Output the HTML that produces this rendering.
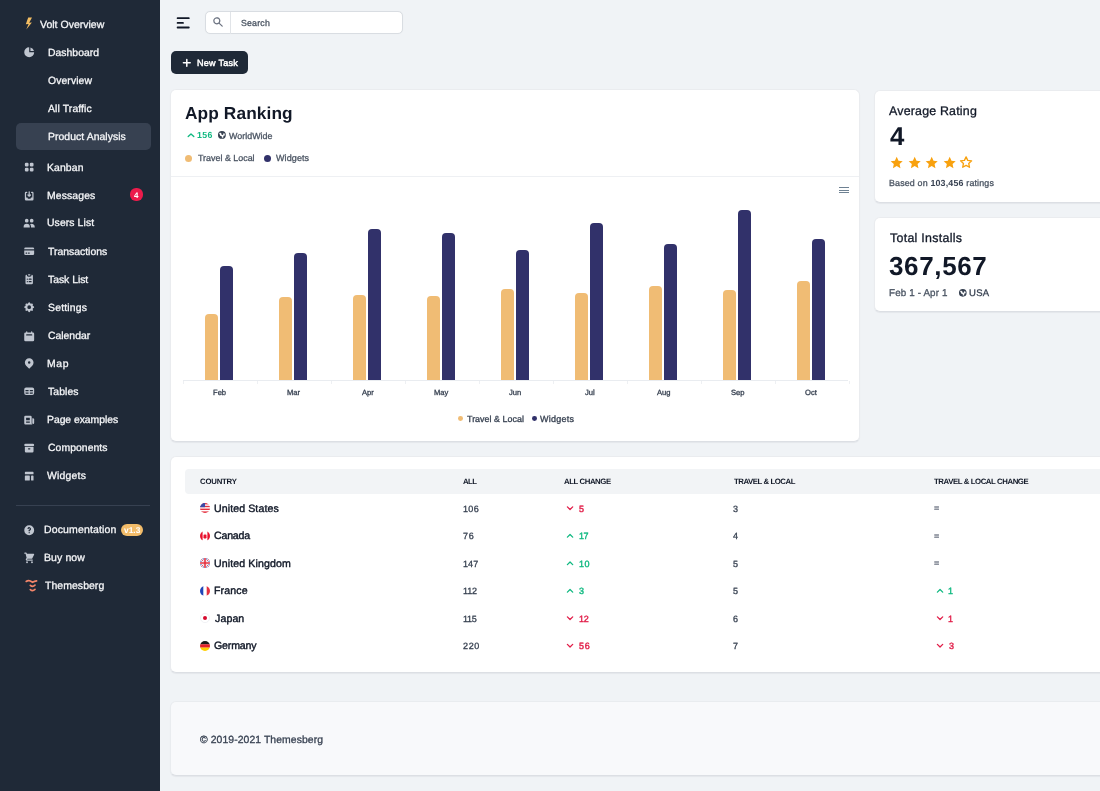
<!DOCTYPE html>
<html><head><meta charset="utf-8"><title>Volt Dashboard</title>
<style>
html,body{margin:0;padding:0;}
body{width:1100px;height:791px;overflow:hidden;position:relative;background:#F0F3F6;font-family:"Liberation Sans",sans-serif;text-rendering:geometricPrecision;}
.t{position:absolute;line-height:1;white-space:nowrap;will-change:transform;}
</style></head><body>
<div style="position:absolute;left:0px;top:0px;width:160px;height:791px;background:#1F2937"></div>
<svg style="position:absolute;left:25px;top:16.5px" width="8" height="13" viewBox="0 0 8 13"><path d="M7 0.5 L3.2 0.5 L0.8 7.2 L3.6 7.0 L1.3 12.5 L6.9 5.6 L4.2 5.8 Z" fill="#F3BD62"/></svg>
<div class="t" style="left:40.10px;top:20px;font-size:10.5px;color:#F5F6F8;font-weight:400;letter-spacing:0.008px;-webkit-text-stroke:0.3px #F5F6F8;">Volt Overview</div>
<div style="position:absolute;left:15.5px;top:123.4px;width:135.5px;height:26.2px;background:#374151;border-radius:5px"></div>
<div class="t" style="left:47.50px;top:49px;font-size:10.4px;color:#F5F6F8;font-weight:400;letter-spacing:0.025px;-webkit-text-stroke:0.3px #F5F6F8;">Dashboard</div>
<svg style="position:absolute;left:23.00px;top:46.40px;" width="12.4" height="12.4" viewBox="0 0 20 20" fill="#C0C6D0"><path d="M2 10a8 8 0 018-8v8h8a8 8 0 11-16 0z"/><path d="M12 2.252A8.014 8.014 0 0117.748 8H12V2.252z"/></svg>
<div class="t" style="left:47.80px;top:77px;font-size:10.4px;color:#F5F6F8;font-weight:400;letter-spacing:0.100px;-webkit-text-stroke:0.3px #F5F6F8;">Overview</div>
<div class="t" style="left:48.30px;top:105px;font-size:10.4px;color:#F5F6F8;font-weight:400;letter-spacing:0.120px;-webkit-text-stroke:0.3px #F5F6F8;">All Traffic</div>
<div class="t" style="left:48.10px;top:133px;font-size:10.4px;color:#F5F6F8;font-weight:400;letter-spacing:0.067px;-webkit-text-stroke:0.3px #F5F6F8;">Product Analysis</div>
<div class="t" style="left:46.90px;top:164px;font-size:10.4px;color:#F5F6F8;font-weight:400;letter-spacing:0.120px;-webkit-text-stroke:0.3px #F5F6F8;">Kanban</div>
<svg style="position:absolute;left:23.00px;top:161.30px;" width="12.4" height="12.4" viewBox="0 0 20 20" fill="#C0C6D0"><path d="M5 3a2 2 0 00-2 2v2a2 2 0 002 2h2a2 2 0 002-2V5a2 2 0 00-2-2H5zM5 11a2 2 0 00-2 2v2a2 2 0 002 2h2a2 2 0 002-2v-2a2 2 0 00-2-2H5zM11 5a2 2 0 012-2h2a2 2 0 012 2v2a2 2 0 01-2 2h-2a2 2 0 01-2-2V5zM11 13a2 2 0 012-2h2a2 2 0 012 2v2a2 2 0 01-2 2h-2a2 2 0 01-2-2v-2z"/></svg>
<div class="t" style="left:46.90px;top:192px;font-size:10.4px;color:#F5F6F8;font-weight:400;letter-spacing:0.129px;-webkit-text-stroke:0.3px #F5F6F8;">Messages</div>
<svg style="position:absolute;left:23.00px;top:189.70px;" width="12.4" height="12.4" viewBox="0 0 20 20" fill="#C0C6D0"><path d="M8.707 7.293a1 1 0 00-1.414 1.414l2 2a1 1 0 001.414 0l2-2a1 1 0 00-1.414-1.414L11 7.586V3a1 1 0 10-2 0v4.586l-.293-.293z"/><path d="M3 5a2 2 0 012-2h1a1 1 0 010 2H5v7h2l1 2h4l1-2h2V5h-1a1 1 0 110-2h1a2 2 0 012 2v10a2 2 0 01-2 2H5a2 2 0 01-2-2V5z"/></svg>
<div class="t" style="left:47.00px;top:219px;font-size:10.4px;color:#F5F6F8;font-weight:400;letter-spacing:0.100px;-webkit-text-stroke:0.3px #F5F6F8;">Users List</div>
<svg style="position:absolute;left:23.00px;top:217.00px;" width="12.4" height="12.4" viewBox="0 0 20 20" fill="#C0C6D0"><path d="M9 6a3 3 0 11-6 0 3 3 0 016 0zM17 6a3 3 0 11-6 0 3 3 0 016 0zM12.93 17c.046-.327.07-.66.07-1a6.97 6.97 0 00-1.5-4.33A5 5 0 0119 16v1h-6.07zM6 11a5 5 0 015 5v1H1v-1a5 5 0 015-5z"/></svg>
<div class="t" style="left:48.10px;top:248px;font-size:10.4px;color:#F5F6F8;font-weight:400;letter-spacing:0.009px;-webkit-text-stroke:0.3px #F5F6F8;">Transactions</div>
<svg style="position:absolute;left:23.00px;top:245.40px;" width="12.4" height="12.4" viewBox="0 0 20 20" fill="#C0C6D0"><path d="M4 4a2 2 0 00-2 2v1h16V6a2 2 0 00-2-2H4z"/><path fill-rule="evenodd" d="M18 9H2v5a2 2 0 002 2h12a2 2 0 002-2V9zM4 13a1 1 0 011-1h1a1 1 0 110 2H5a1 1 0 01-1-1zm5-1a1 1 0 100 2h1a1 1 0 100-2H9z"/></svg>
<div class="t" style="left:48.10px;top:276px;font-size:10.4px;color:#F5F6F8;font-weight:400;letter-spacing:-0.025px;-webkit-text-stroke:0.3px #F5F6F8;">Task List</div>
<svg style="position:absolute;left:23.00px;top:273.30px;" width="12.4" height="12.4" viewBox="0 0 20 20" fill="#C0C6D0"><path d="M9 2a1 1 0 000 2h2a1 1 0 100-2H9z"/><path fill-rule="evenodd" d="M4 5a2 2 0 012-2 3 3 0 003 3h2a3 3 0 003-3 2 2 0 012 2v11a2 2 0 01-2 2H6a2 2 0 01-2-2V5zm3 4a1 1 0 000 2h.01a1 1 0 100-2H7zm3 0a1 1 0 000 2h3a1 1 0 100-2h-3zm-3 4a1 1 0 100 2h.01a1 1 0 100-2H7zm3 0a1 1 0 100 2h3a1 1 0 100-2h-3z"/></svg>
<div class="t" style="left:47.50px;top:304px;font-size:10.4px;color:#F5F6F8;font-weight:400;letter-spacing:0.214px;-webkit-text-stroke:0.3px #F5F6F8;">Settings</div>
<svg style="position:absolute;left:23.00px;top:301.40px;" width="12.4" height="12.4" viewBox="0 0 20 20" fill="#C0C6D0"><path fill-rule="evenodd" d="M11.49 3.17c-.38-1.560-2.6-1.56-2.98 0a1.532 1.532 0 01-2.286.948c-1.372-.836-2.942.734-2.106 2.106.54.886.061 2.042-.947 2.287-1.561.379-1.561 2.6 0 2.978a1.532 1.532 0 01.947 2.287c-.836 1.372.734 2.942 2.106 2.106a1.532 1.532 0 012.287.947c.379 1.561 2.6 1.561 2.978 0a1.533 1.533 0 012.287-.947c1.372.836 2.942-.734 2.106-2.106a1.533 1.533 0 01.947-2.287c1.561-.379 1.561-2.6 0-2.978a1.532 1.532 0 01-.947-2.287c.836-1.372-.734-2.942-2.106-2.106a1.532 1.532 0 01-2.287-.947zM10 13a3 3 0 100-6 3 3 0 000 6z"/></svg>
<div class="t" style="left:47.50px;top:332px;font-size:10.4px;color:#F5F6F8;font-weight:400;-webkit-text-stroke:0.3px #F5F6F8;">Calendar</div>
<svg style="position:absolute;left:23.00px;top:329.70px;" width="12.4" height="12.4" viewBox="0 0 20 20" fill="#C0C6D0"><path fill-rule="evenodd" d="M6 2a1 1 0 00-1 1v1H4a2 2 0 00-2 2v10a2 2 0 002 2h12a2 2 0 002-2V6a2 2 0 00-2-2h-1V3a1 1 0 10-2 0v1H7V3a1 1 0 00-1-1zm0 5a1 1 0 000 2h8a1 1 0 100-2H6z"/></svg>
<div class="t" style="left:47.10px;top:360px;font-size:10.4px;color:#F5F6F8;font-weight:400;letter-spacing:0.600px;-webkit-text-stroke:0.3px #F5F6F8;">Map</div>
<svg style="position:absolute;left:23.00px;top:357.40px;" width="12.4" height="12.4" viewBox="0 0 20 20" fill="#C0C6D0"><path fill-rule="evenodd" d="M5.05 4.05a7 7 0 119.9 9.9L10 18.9l-4.95-4.95a7 7 0 010-9.9zM10 11a2 2 0 100-4 2 2 0 000 4z"/></svg>
<div class="t" style="left:47.80px;top:388px;font-size:10.4px;color:#F5F6F8;font-weight:400;letter-spacing:0.100px;-webkit-text-stroke:0.3px #F5F6F8;">Tables</div>
<svg style="position:absolute;left:23.00px;top:385.30px;" width="12.4" height="12.4" viewBox="0 0 20 20" fill="#C0C6D0"><path fill-rule="evenodd" d="M5 4a3 3 0 00-3 3v6a3 3 0 003 3h10a3 3 0 003-3V7a3 3 0 00-3-3H5zm-1 9v-1h5v2H5a1 1 0 01-1-1zm7 1h4a1 1 0 001-1v-1h-5v2zm0-4h5V8h-5v2zM9 8H4v2h5V8z"/></svg>
<div class="t" style="left:47.10px;top:416px;font-size:10.4px;color:#F5F6F8;font-weight:400;letter-spacing:-0.042px;-webkit-text-stroke:0.3px #F5F6F8;">Page examples</div>
<svg style="position:absolute;left:23.00px;top:413.70px;" width="12.4" height="12.4" viewBox="0 0 20 20" fill="#C0C6D0"><path fill-rule="evenodd" d="M2 5a2 2 0 012-2h8a2 2 0 012 2v10a2 2 0 002 2H4a2 2 0 01-2-2V5zm3 1h6v4H5V6zm6 6H5v2h6v-2z"/><path d="M15 7h1a2 2 0 012 2v5.5a1.5 1.5 0 01-3 0V7z"/></svg>
<div class="t" style="left:47.50px;top:444px;font-size:10.4px;color:#F5F6F8;font-weight:400;letter-spacing:0.067px;-webkit-text-stroke:0.3px #F5F6F8;">Components</div>
<svg style="position:absolute;left:23.00px;top:442.10px;" width="12.4" height="12.4" viewBox="0 0 20 20" fill="#C0C6D0"><path d="M4 3a2 2 0 100 4h12a2 2 0 100-4H4z"/><path fill-rule="evenodd" d="M3 8h14v7a2 2 0 01-2 2H5a2 2 0 01-2-2V8zm5 3a1 1 0 011-1h2a1 1 0 110 2H9a1 1 0 01-1-1z"/></svg>
<div class="t" style="left:47.30px;top:472px;font-size:10.4px;color:#F5F6F8;font-weight:400;letter-spacing:0.217px;-webkit-text-stroke:0.3px #F5F6F8;">Widgets</div>
<svg style="position:absolute;left:23.00px;top:469.90px;" width="12.4" height="12.4" viewBox="0 0 20 20" fill="#C0C6D0"><path d="M3 4a1 1 0 011-1h12a1 1 0 011 1v2a1 1 0 01-1 1H4a1 1 0 01-1-1V4zM3 10a1 1 0 011-1h6a1 1 0 011 1v6a1 1 0 01-1 1H4a1 1 0 01-1-1v-6zM14 9a1 1 0 00-1 1v6a1 1 0 001 1h2a1 1 0 001-1v-6a1 1 0 00-1-1h-2z"/></svg>
<div style="position:absolute;left:130.1px;top:188.4px;width:13.4px;height:12.9px;background:#EC1B4B;border-radius:6px"></div>
<div class="t" style="left:134.05px;top:192px;font-size:8.0px;color:#fff;font-weight:700;">4</div>
<div style="position:absolute;left:16px;top:505px;width:134px;height:1px;background:#374151"></div>
<div class="t" style="left:43.70px;top:525px;font-size:10.5px;color:#F5F6F8;font-weight:400;letter-spacing:0.150px;-webkit-text-stroke:0.3px #F5F6F8;">Documentation</div>
<svg style="position:absolute;left:23.00px;top:523.80px;" width="12.4" height="12.4" viewBox="0 0 20 20" fill="#C0C6D0"><path fill-rule="evenodd" d="M18 10a8 8 0 11-16 0 8 8 0 0116 0zm-8-3a1 1 0 00-.867.5 1 1 0 11-1.731-1A3 3 0 0113 8a3.001 3.001 0 01-2 2.830V11a1 1 0 11-2 0v-1a1 1 0 011-1 1 1 0 100-2zm0 8a1 1 0 100-2 1 1 0 000 2z"/></svg>
<div style="position:absolute;left:121px;top:523.7px;width:22.3px;height:12.5px;background:#F2BC6A;border-radius:6px"></div>
<div class="t" style="left:124.35px;top:526px;font-size:8.4px;color:#fff;font-weight:700;">v1.3</div>
<div class="t" style="left:43.70px;top:553px;font-size:10.5px;color:#F5F6F8;font-weight:400;letter-spacing:0.100px;-webkit-text-stroke:0.3px #F5F6F8;">Buy now</div>
<svg style="position:absolute;left:23.00px;top:551.80px;" width="12.4" height="12.4" viewBox="0 0 20 20" fill="#C0C6D0"><path d="M3 1a1 1 0 000 2h1.22l.305 1.222a.997.997 0 00.01.042l1.358 5.43-.893.892C3.74 11.846 4.632 14 6.414 14H15a1 1 0 000-2H6.414l1-1H14a1 1 0 00.894-.553l3-6A1 1 0 0017 3H6.28l-.31-1.243A1 1 0 005 1H3zM16 16.5a1.5 1.5 0 11-3 0 1.5 1.5 0 013 0zM6.5 18a1.5 1.5 0 100-3 1.5 1.5 0 000 3z"/></svg>
<div class="t" style="left:44.90px;top:581px;font-size:10.5px;color:#F5F6F8;font-weight:400;letter-spacing:0.033px;-webkit-text-stroke:0.3px #F5F6F8;">Themesberg</div>
<svg style="position:absolute;left:25px;top:579px" width="14" height="14" viewBox="0 0 14 14" fill="none" stroke="#F4866A" stroke-width="1.65" stroke-linecap="round"><path d="M1.2 2.5 Q2.8 1.2 4.6 1.8 Q6.5 2.6 7.5 3.3 Q9.5 2.2 11.6 1.9"/><path d="M5.3 6.3 Q7.6 8.4 10 6.1"/><path d="M5.3 10.6 Q7.6 12.6 10 10.4"/></svg>
<svg style="position:absolute;left:170px;top:10px" width="30" height="25" viewBox="170 10 30 25" fill="none" stroke="#111827" stroke-width="1.8" stroke-linecap="round"><path d="M177.6 18.2H188.8M177.6 22.9H183M177.6 27.5H188.8"/></svg>
<div style="position:absolute;left:205.3px;top:10.6px;width:197.4px;height:23.6px;background:#fff;border:1px solid #D9DDE2;border-radius:5px;box-sizing:border-box;box-shadow:0 0 1px rgba(17,24,39,0.06)"></div>
<div style="position:absolute;left:230.2px;top:11.5px;width:0.8px;height:22.5px;background:#E1E4E8"></div>
<svg style="position:absolute;left:212.00px;top:16.00px;" width="12" height="12" viewBox="0 0 20 20" fill="#6B7280"><path fill-rule="evenodd" d="M8 4a4 4 0 100 8 4 4 0 000-8zM2 8a6 6 0 1110.89 3.476l4.817 4.817a1 1 0 01-1.414 1.414l-4.816-4.816A6 6 0 012 8z"/></svg>
<div class="t" style="left:240.90px;top:19px;font-size:8.8px;color:#4B5563;font-weight:400;letter-spacing:0.180px;-webkit-text-stroke:0.3px #4B5563;">Search</div>
<div style="position:absolute;left:170.5px;top:50.8px;width:77.7px;height:23.4px;background:#1F2937;border-radius:5px"></div>
<svg style="position:absolute;left:0;top:0;overflow:visible" width="1" height="1"><path d="M183.4 62.8H190.2M186.8 59.4V66.2" stroke="#fff" stroke-width="1.5" stroke-linecap="round" fill="none"/></svg>
<div class="t" style="left:197.10px;top:59px;font-size:9.1px;color:#fff;font-weight:400;letter-spacing:0.229px;-webkit-text-stroke:0.45px #fff;">New Task</div>
<div style="position:absolute;left:170px;top:89px;width:689.8px;height:352.8px;background:#fff;border:1px solid #EAECEF;border-bottom-color:#DCDFE4;border-radius:6px;box-sizing:border-box;box-shadow:0 1px 1px rgba(17,24,39,0.05)"></div>
<div class="t" style="left:185.00px;top:105px;font-size:17.3px;color:#111827;font-weight:700;letter-spacing:0.110px;">App Ranking</div>
<svg style="position:absolute;left:0;top:0;overflow:visible" width="1" height="1"><path d="M188.2 136.6 L191.0 134.0 L193.79999999999998 136.6" fill="none" stroke="#10B981" stroke-width="1.35" stroke-linecap="round" stroke-linejoin="round"/></svg>
<div class="t" style="left:196.90px;top:131px;font-size:8.8px;color:#10B981;font-weight:700;letter-spacing:0.300px;">156</div>
<svg style="position:absolute;left:216.80px;top:130.40px;" width="9.8" height="9.8" viewBox="0 0 20 20" fill="#374151"><path fill-rule="evenodd" d="M10 18a8 8 0 100-16 8 8 0 000 16zM4.332 8.027a6.012 6.012 0 011.912-2.706C6.512 5.73 6.974 6 7.5 6A1.5 1.5 0 019 7.5V8a2 2 0 004 0 2 2 0 011.523-1.943A5.977 5.977 0 0116 10c0 .34-.028.675-.083 1H15a2 2 0 00-2 2v2.197A5.973 5.973 0 0110 16v-2a2 2 0 00-2-2 2 2 0 01-2-2 2 2 0 00-1.668-1.973z"/></svg>
<div class="t" style="left:229.40px;top:132px;font-size:8.9px;color:#4B5563;font-weight:400;letter-spacing:0.037px;-webkit-text-stroke:0.3px #4B5563;">WorldWide</div>
<div style="position:absolute;left:185px;top:154.6px;width:7.3px;height:7.3px;background:#F0BC74;border-radius:50%"></div>
<div class="t" style="left:197.60px;top:154px;font-size:8.9px;color:#4B5563;font-weight:400;letter-spacing:0.015px;-webkit-text-stroke:0.3px #4B5563;">Travel &amp; Local</div>
<div style="position:absolute;left:264px;top:154.6px;width:7.3px;height:7.3px;background:#31316A;border-radius:50%"></div>
<div class="t" style="left:276.30px;top:154px;font-size:9.0px;color:#4B5563;font-weight:400;letter-spacing:0.100px;-webkit-text-stroke:0.3px #4B5563;">Widgets</div>
<div style="position:absolute;left:171px;top:176px;width:688px;height:1px;background:#EEF0F3"></div>
<div style="position:absolute;left:839.3px;top:187.0px;width:9.5px;height:0.9px;background:#6E8192"></div>
<div style="position:absolute;left:839.3px;top:189.8px;width:9.5px;height:0.9px;background:#6E8192"></div>
<div style="position:absolute;left:839.3px;top:192.4px;width:9.5px;height:0.9px;background:#6E8192"></div>
<div style="position:absolute;left:183px;top:379.6px;width:665px;height:0.9px;background:#E9ECF0"></div>
<div style="position:absolute;left:183px;top:380.5px;width:0.8px;height:3px;background:#EEF0F3"></div>
<div style="position:absolute;left:257px;top:380.5px;width:0.8px;height:3px;background:#EEF0F3"></div>
<div style="position:absolute;left:331px;top:380.5px;width:0.8px;height:3px;background:#EEF0F3"></div>
<div style="position:absolute;left:405px;top:380.5px;width:0.8px;height:3px;background:#EEF0F3"></div>
<div style="position:absolute;left:479px;top:380.5px;width:0.8px;height:3px;background:#EEF0F3"></div>
<div style="position:absolute;left:553px;top:380.5px;width:0.8px;height:3px;background:#EEF0F3"></div>
<div style="position:absolute;left:627px;top:380.5px;width:0.8px;height:3px;background:#EEF0F3"></div>
<div style="position:absolute;left:701px;top:380.5px;width:0.8px;height:3px;background:#EEF0F3"></div>
<div style="position:absolute;left:775px;top:380.5px;width:0.8px;height:3px;background:#EEF0F3"></div>
<div style="position:absolute;left:849px;top:380.5px;width:0.8px;height:3px;background:#EEF0F3"></div>
<div style="position:absolute;left:204.9px;top:314px;width:13px;height:65.6px;background:#F0BC74;border-radius:4px 4px 0 0"></div>
<div style="position:absolute;left:219.7px;top:266.2px;width:13.3px;height:113.4px;background:#31316A;border-radius:4px 4px 0 0"></div>
<div class="t" style="left:212.70px;top:389px;font-size:7.6px;color:#374151;font-weight:400;-webkit-text-stroke:0.3px #374151;">Feb</div>
<div style="position:absolute;left:278.9px;top:297.2px;width:13px;height:82.4px;background:#F0BC74;border-radius:4px 4px 0 0"></div>
<div style="position:absolute;left:293.7px;top:252.5px;width:13.3px;height:127.1px;background:#31316A;border-radius:4px 4px 0 0"></div>
<div class="t" style="left:286.60px;top:389px;font-size:7.6px;color:#374151;font-weight:400;-webkit-text-stroke:0.3px #374151;">Mar</div>
<div style="position:absolute;left:352.9px;top:294.5px;width:13px;height:85.1px;background:#F0BC74;border-radius:4px 4px 0 0"></div>
<div style="position:absolute;left:367.7px;top:228.7px;width:13.3px;height:150.9px;background:#31316A;border-radius:4px 4px 0 0"></div>
<div class="t" style="left:361.55px;top:389px;font-size:7.6px;color:#374151;font-weight:400;-webkit-text-stroke:0.3px #374151;">Apr</div>
<div style="position:absolute;left:426.9px;top:296px;width:13px;height:83.6px;background:#F0BC74;border-radius:4px 4px 0 0"></div>
<div style="position:absolute;left:441.7px;top:233.1px;width:13.3px;height:146.5px;background:#31316A;border-radius:4px 4px 0 0"></div>
<div class="t" style="left:433.95px;top:389px;font-size:7.6px;color:#374151;font-weight:400;-webkit-text-stroke:0.3px #374151;">May</div>
<div style="position:absolute;left:500.9px;top:288.5px;width:13px;height:91.1px;background:#F0BC74;border-radius:4px 4px 0 0"></div>
<div style="position:absolute;left:515.7px;top:249.5px;width:13.3px;height:130.1px;background:#31316A;border-radius:4px 4px 0 0"></div>
<div class="t" style="left:509.45px;top:389px;font-size:7.6px;color:#374151;font-weight:400;-webkit-text-stroke:0.3px #374151;">Jun</div>
<div style="position:absolute;left:574.9px;top:293.1px;width:13px;height:86.5px;background:#F0BC74;border-radius:4px 4px 0 0"></div>
<div style="position:absolute;left:589.7px;top:222.7px;width:13.3px;height:156.9px;background:#31316A;border-radius:4px 4px 0 0"></div>
<div class="t" style="left:584.75px;top:389px;font-size:7.6px;color:#374151;font-weight:400;-webkit-text-stroke:0.3px #374151;">Jul</div>
<div style="position:absolute;left:648.9px;top:285.5px;width:13px;height:94.1px;background:#F0BC74;border-radius:4px 4px 0 0"></div>
<div style="position:absolute;left:663.7px;top:243.6px;width:13.3px;height:136.0px;background:#31316A;border-radius:4px 4px 0 0"></div>
<div class="t" style="left:656.90px;top:389px;font-size:7.6px;color:#374151;font-weight:400;-webkit-text-stroke:0.3px #374151;">Aug</div>
<div style="position:absolute;left:722.9px;top:290px;width:13px;height:89.6px;background:#F0BC74;border-radius:4px 4px 0 0"></div>
<div style="position:absolute;left:737.7px;top:209.5px;width:13.3px;height:170.1px;background:#31316A;border-radius:4px 4px 0 0"></div>
<div class="t" style="left:730.60px;top:389px;font-size:7.6px;color:#374151;font-weight:400;-webkit-text-stroke:0.3px #374151;">Sep</div>
<div style="position:absolute;left:796.9px;top:281px;width:13px;height:98.6px;background:#F0BC74;border-radius:4px 4px 0 0"></div>
<div style="position:absolute;left:811.7px;top:239.3px;width:13.3px;height:140.3px;background:#31316A;border-radius:4px 4px 0 0"></div>
<div class="t" style="left:805.30px;top:389px;font-size:7.6px;color:#374151;font-weight:400;-webkit-text-stroke:0.3px #374151;">Oct</div>
<div style="position:absolute;left:457.8px;top:415.8px;width:4.8px;height:4.8px;background:#F0BC74;border-radius:50%"></div>
<div class="t" style="left:466.70px;top:415px;font-size:8.9px;color:#374151;font-weight:400;letter-spacing:0.038px;-webkit-text-stroke:0.3px #374151;">Travel &amp; Local</div>
<div style="position:absolute;left:531.8px;top:415.8px;width:4.8px;height:4.8px;background:#31316A;border-radius:50%"></div>
<div class="t" style="left:539.90px;top:415px;font-size:9.0px;color:#374151;font-weight:400;letter-spacing:0.233px;-webkit-text-stroke:0.3px #374151;">Widgets</div>
<div style="position:absolute;left:874px;top:89.7px;width:240px;height:113.3px;background:#fff;border:1px solid #EAECEF;border-bottom-color:#DCDFE4;border-radius:6px;box-sizing:border-box;box-shadow:0 1px 1px rgba(17,24,39,0.05)"></div>
<div class="t" style="left:889.20px;top:105px;font-size:12.4px;color:#111827;font-weight:400;letter-spacing:0.200px;-webkit-text-stroke:0.3px #111827;">Average Rating</div>
<div class="t" style="left:889.60px;top:125px;font-size:25.8px;color:#111827;font-weight:700;">4</div>
<svg style="position:absolute;left:889.80px;top:155.70px;" width="13.4" height="13.4" viewBox="0 0 20 20" fill="#F8A10E"><path d="M10 1.2l2.7 5.8 6.3.7-4.7 4.3 1.3 6.2L10 15.1l-5.6 3.1 1.3-6.2L1 7.7l6.3-.7z"/></svg>
<svg style="position:absolute;left:907.70px;top:155.70px;" width="13.4" height="13.4" viewBox="0 0 20 20" fill="#F8A10E"><path d="M10 1.2l2.7 5.8 6.3.7-4.7 4.3 1.3 6.2L10 15.1l-5.6 3.1 1.3-6.2L1 7.7l6.3-.7z"/></svg>
<svg style="position:absolute;left:924.60px;top:155.70px;" width="13.4" height="13.4" viewBox="0 0 20 20" fill="#F8A10E"><path d="M10 1.2l2.7 5.8 6.3.7-4.7 4.3 1.3 6.2L10 15.1l-5.6 3.1 1.3-6.2L1 7.7l6.3-.7z"/></svg>
<svg style="position:absolute;left:942.50px;top:155.70px;" width="13.4" height="13.4" viewBox="0 0 20 20" fill="#F8A10E"><path d="M10 1.2l2.7 5.8 6.3.7-4.7 4.3 1.3 6.2L10 15.1l-5.6 3.1 1.3-6.2L1 7.7l6.3-.7z"/></svg>
<svg style="position:absolute;left:958.90px;top:155.00px;" width="14.2" height="14.2" viewBox="0 0 20 20" fill="none"><path d="M10 2.6l2.3 5 5.5.6-4.1 3.7 1.1 5.4L10 14.6l-4.8 2.7 1.1-5.4L2.2 8.2l5.5-.6z" fill="none" stroke="#F8A10E" stroke-width="1.9" stroke-linejoin="round"/></svg>
<div class="t" style="left:888.50px;top:179px;font-size:8.9px;color:#4B5563;font-weight:400;letter-spacing:0.161px;-webkit-text-stroke:0.3px #4B5563;">Based on <b style="font-weight:700;color:#374151;-webkit-text-stroke:0">103,456</b> ratings</div>
<div style="position:absolute;left:874px;top:217.3px;width:240px;height:94.5px;background:#fff;border:1px solid #EAECEF;border-bottom-color:#DCDFE4;border-radius:6px;box-sizing:border-box;box-shadow:0 1px 1px rgba(17,24,39,0.05)"></div>
<div class="t" style="left:889.50px;top:232px;font-size:12.4px;color:#111827;font-weight:400;letter-spacing:0.292px;-webkit-text-stroke:0.3px #111827;">Total Installs</div>
<div class="t" style="left:889.20px;top:253px;font-size:26.0px;color:#111827;font-weight:700;letter-spacing:0.633px;">367,567</div>
<div class="t" style="left:889.00px;top:289px;font-size:9.8px;color:#4B5563;font-weight:400;letter-spacing:0.150px;-webkit-text-stroke:0.3px #4B5563;">Feb 1 - Apr 1</div>
<svg style="position:absolute;left:957.80px;top:287.80px;" width="9.6" height="9.6" viewBox="0 0 20 20" fill="#374151"><path fill-rule="evenodd" d="M10 18a8 8 0 100-16 8 8 0 000 16zM4.332 8.027a6.012 6.012 0 011.912-2.706C6.512 5.73 6.974 6 7.5 6A1.5 1.5 0 019 7.5V8a2 2 0 004 0 2 2 0 011.523-1.943A5.977 5.977 0 0116 10c0 .34-.028.675-.083 1H15a2 2 0 00-2 2v2.197A5.973 5.973 0 0110 16v-2a2 2 0 00-2-2 2 2 0 01-2-2 2 2 0 00-1.668-1.973z"/></svg>
<div class="t" style="left:969.10px;top:289px;font-size:9.5px;color:#374151;font-weight:400;letter-spacing:0.300px;-webkit-text-stroke:0.3px #374151;">USA</div>
<div style="position:absolute;left:170px;top:456px;width:960px;height:217px;background:#fff;border:1px solid #EAECEF;border-bottom-color:#DCDFE4;border-radius:6px;box-sizing:border-box;box-shadow:0 1px 1px rgba(17,24,39,0.05)"></div>
<div style="position:absolute;left:185.4px;top:469px;width:960px;height:25px;background:#F2F4F6;border-radius:4px"></div>
<div class="t" style="left:199.60px;top:478px;font-size:7.8px;color:#111827;font-weight:700;letter-spacing:-0.233px;">COUNTRY</div>
<div class="t" style="left:463.40px;top:478px;font-size:7.8px;color:#111827;font-weight:700;letter-spacing:-0.600px;">ALL</div>
<div class="t" style="left:564.00px;top:478px;font-size:7.8px;color:#111827;font-weight:700;letter-spacing:-0.422px;">ALL CHANGE</div>
<div class="t" style="left:733.70px;top:478px;font-size:7.8px;color:#111827;font-weight:700;letter-spacing:-0.446px;">TRAVEL &amp; LOCAL</div>
<div class="t" style="left:934.10px;top:478px;font-size:7.8px;color:#111827;font-weight:700;letter-spacing:-0.420px;">TRAVEL &amp; LOCAL CHANGE</div>
<svg style="position:absolute;left:199.8px;top:503.20px" width="10" height="10" viewBox="0 0 10 10"><clipPath id="cus"><circle cx="5" cy="5" r="5"/></clipPath><g clip-path="url(#cus)"><rect width="10" height="10" fill="#fff"/><rect y="0" width="10" height="1.4" fill="#E4303F"/><rect y="2.8" width="10" height="1.4" fill="#E4303F"/><rect y="5.6" width="10" height="1.4" fill="#E4303F"/><rect y="8.4" width="10" height="1.6" fill="#E4303F"/><rect width="5" height="4.2" fill="#3B4AA8"/></g></svg>
<div class="t" style="left:213.90px;top:504px;font-size:10.6px;color:#111827;font-weight:400;letter-spacing:0.092px;-webkit-text-stroke:0.4px #111827;">United States</div>
<div class="t" style="left:462.90px;top:505px;font-size:9.0px;color:#374151;font-weight:400;letter-spacing:0.350px;-webkit-text-stroke:0.3px #374151;">106</div>
<svg style="position:absolute;left:0;top:0;overflow:visible" width="1" height="1"><path d="M567.4 506.90000000000003 L570.05 509.50000000000006 L572.6999999999999 506.90000000000003" fill="none" stroke="#E11D48" stroke-width="1.3" stroke-linecap="round" stroke-linejoin="round"/></svg>
<div class="t" style="left:578.90px;top:505px;font-size:9.0px;color:#E11D48;font-weight:400;-webkit-text-stroke:0.4px #E11D48;">5</div>
<div class="t" style="left:733.40px;top:505px;font-size:9.0px;color:#374151;font-weight:400;-webkit-text-stroke:0.3px #374151;">3</div>
<div class="t" style="left:933.80px;top:504px;font-size:9.0px;color:#6B7280;font-weight:400;-webkit-text-stroke:0.3px #6B7280;">=</div>
<svg style="position:absolute;left:199.8px;top:530.70px" width="10" height="10" viewBox="0 0 10 10"><clipPath id="cca"><circle cx="5" cy="5" r="5"/></clipPath><g clip-path="url(#cca)"><rect width="10" height="10" fill="#fff"/><rect width="2.6" height="10" fill="#E8112D"/><rect x="7.4" width="2.6" height="10" fill="#E8112D"/><path d="M5 2.6l.7 1.4.9-.3-.3 2.3.8-.4.2.7L6 6.8l.2.8H3.8l.2-.8L2.7 6.3l.2-.7.8.4-.3-2.3.9.3z" fill="#E8112D"/></g></svg>
<div class="t" style="left:214.20px;top:531px;font-size:10.6px;color:#111827;font-weight:400;letter-spacing:-0.200px;-webkit-text-stroke:0.4px #111827;">Canada</div>
<div class="t" style="left:463.10px;top:532px;font-size:9.0px;color:#374151;font-weight:400;letter-spacing:0.700px;-webkit-text-stroke:0.3px #374151;">76</div>
<svg style="position:absolute;left:0;top:0;overflow:visible" width="1" height="1"><path d="M567.4 537.0999999999999 L570.05 534.4999999999999 L572.6999999999999 537.0999999999999" fill="none" stroke="#10B981" stroke-width="1.3" stroke-linecap="round" stroke-linejoin="round"/></svg>
<div class="t" style="left:578.60px;top:532px;font-size:9.0px;color:#10B981;font-weight:400;letter-spacing:-0.600px;-webkit-text-stroke:0.4px #10B981;">17</div>
<div class="t" style="left:732.90px;top:532px;font-size:9.0px;color:#374151;font-weight:400;-webkit-text-stroke:0.3px #374151;">4</div>
<div class="t" style="left:933.80px;top:532px;font-size:9.0px;color:#6B7280;font-weight:400;-webkit-text-stroke:0.3px #6B7280;">=</div>
<svg style="position:absolute;left:199.8px;top:558.20px" width="10" height="10" viewBox="0 0 10 10"><clipPath id="cuk"><circle cx="5" cy="5" r="5"/></clipPath><g clip-path="url(#cuk)"><rect width="10" height="10" fill="#3246A0"/><path d="M0 0L10 10M10 0L0 10" stroke="#fff" stroke-width="2"/><path d="M0 0L10 10M10 0L0 10" stroke="#E4303F" stroke-width="0.8"/><path d="M5 0V10M0 5H10" stroke="#fff" stroke-width="3"/><path d="M5 0V10M0 5H10" stroke="#E4303F" stroke-width="1.6"/></g></svg>
<div class="t" style="left:213.90px;top:559px;font-size:10.6px;color:#111827;font-weight:400;letter-spacing:0.115px;-webkit-text-stroke:0.4px #111827;">United Kingdom</div>
<div class="t" style="left:462.90px;top:560px;font-size:9.0px;color:#374151;font-weight:400;letter-spacing:0.100px;-webkit-text-stroke:0.3px #374151;">147</div>
<svg style="position:absolute;left:0;top:0;overflow:visible" width="1" height="1"><path d="M567.4 564.5999999999999 L570.05 561.9999999999999 L572.6999999999999 564.5999999999999" fill="none" stroke="#10B981" stroke-width="1.3" stroke-linecap="round" stroke-linejoin="round"/></svg>
<div class="t" style="left:578.60px;top:560px;font-size:9.0px;color:#10B981;font-weight:400;letter-spacing:0.600px;-webkit-text-stroke:0.4px #10B981;">10</div>
<div class="t" style="left:733.40px;top:560px;font-size:9.0px;color:#374151;font-weight:400;-webkit-text-stroke:0.3px #374151;">5</div>
<div class="t" style="left:933.80px;top:559px;font-size:9.0px;color:#6B7280;font-weight:400;-webkit-text-stroke:0.3px #6B7280;">=</div>
<svg style="position:absolute;left:199.8px;top:585.70px" width="10" height="10" viewBox="0 0 10 10"><clipPath id="cfr"><circle cx="5" cy="5" r="5"/></clipPath><g clip-path="url(#cfr)"><rect width="10" height="10" fill="#fff"/><rect width="3.3" height="10" fill="#2145B8"/><rect x="6.7" width="3.3" height="10" fill="#E4303F"/></g></svg>
<div class="t" style="left:213.80px;top:586px;font-size:10.6px;color:#111827;font-weight:400;letter-spacing:0.120px;-webkit-text-stroke:0.4px #111827;">France</div>
<div class="t" style="left:462.90px;top:587px;font-size:9.0px;color:#374151;font-weight:400;letter-spacing:-0.200px;-webkit-text-stroke:0.3px #374151;">112</div>
<svg style="position:absolute;left:0;top:0;overflow:visible" width="1" height="1"><path d="M567.4 592.0999999999999 L570.05 589.4999999999999 L572.6999999999999 592.0999999999999" fill="none" stroke="#10B981" stroke-width="1.3" stroke-linecap="round" stroke-linejoin="round"/></svg>
<div class="t" style="left:578.90px;top:587px;font-size:9.0px;color:#10B981;font-weight:400;-webkit-text-stroke:0.4px #10B981;">3</div>
<div class="t" style="left:733.40px;top:587px;font-size:9.0px;color:#374151;font-weight:400;-webkit-text-stroke:0.3px #374151;">5</div>
<svg style="position:absolute;left:0;top:0;overflow:visible" width="1" height="1"><path d="M937.4 592.0999999999999 L940.05 589.4999999999999 L942.6999999999999 592.0999999999999" fill="none" stroke="#10B981" stroke-width="1.3" stroke-linecap="round" stroke-linejoin="round"/></svg>
<div class="t" style="left:948.30px;top:587px;font-size:9.0px;color:#10B981;font-weight:400;-webkit-text-stroke:0.4px #10B981;">1</div>
<svg style="position:absolute;left:199.8px;top:613.20px" width="10" height="10" viewBox="0 0 10 10"><circle cx="5" cy="5" r="4.6" fill="#fff" stroke="#E8EAEE" stroke-width="0.6"/><circle cx="5" cy="5" r="2" fill="#D60A2E"/></svg>
<div class="t" style="left:214.50px;top:614px;font-size:10.6px;color:#111827;font-weight:400;letter-spacing:0.100px;-webkit-text-stroke:0.4px #111827;">Japan</div>
<div class="t" style="left:462.90px;top:615px;font-size:9.0px;color:#374151;font-weight:400;letter-spacing:-0.250px;-webkit-text-stroke:0.3px #374151;">115</div>
<svg style="position:absolute;left:0;top:0;overflow:visible" width="1" height="1"><path d="M567.4 616.9 L570.05 619.5 L572.6999999999999 616.9" fill="none" stroke="#E11D48" stroke-width="1.3" stroke-linecap="round" stroke-linejoin="round"/></svg>
<div class="t" style="left:578.60px;top:615px;font-size:9.0px;color:#E11D48;font-weight:400;letter-spacing:-0.200px;-webkit-text-stroke:0.4px #E11D48;">12</div>
<div class="t" style="left:733.30px;top:615px;font-size:9.0px;color:#374151;font-weight:400;-webkit-text-stroke:0.3px #374151;">6</div>
<svg style="position:absolute;left:0;top:0;overflow:visible" width="1" height="1"><path d="M937.4 616.9 L940.05 619.5 L942.6999999999999 616.9" fill="none" stroke="#E11D48" stroke-width="1.3" stroke-linecap="round" stroke-linejoin="round"/></svg>
<div class="t" style="left:948.30px;top:615px;font-size:9.0px;color:#E11D48;font-weight:400;-webkit-text-stroke:0.4px #E11D48;">1</div>
<svg style="position:absolute;left:199.8px;top:640.70px" width="10" height="10" viewBox="0 0 10 10"><clipPath id="cde"><circle cx="5" cy="5" r="5"/></clipPath><g clip-path="url(#cde)"><rect width="10" height="3.4" fill="#1a1a1a"/><rect y="3.3" width="10" height="3.4" fill="#E4202A"/><rect y="6.6" width="10" height="3.4" fill="#FFCE00"/></g></svg>
<div class="t" style="left:214.20px;top:641px;font-size:10.6px;color:#111827;font-weight:400;letter-spacing:-0.167px;-webkit-text-stroke:0.4px #111827;">Germany</div>
<div class="t" style="left:463.10px;top:642px;font-size:9.0px;color:#374151;font-weight:400;letter-spacing:0.650px;-webkit-text-stroke:0.3px #374151;">220</div>
<svg style="position:absolute;left:0;top:0;overflow:visible" width="1" height="1"><path d="M567.4 644.4 L570.05 647.0 L572.6999999999999 644.4" fill="none" stroke="#E11D48" stroke-width="1.3" stroke-linecap="round" stroke-linejoin="round"/></svg>
<div class="t" style="left:578.90px;top:642px;font-size:9.0px;color:#E11D48;font-weight:400;letter-spacing:0.700px;-webkit-text-stroke:0.4px #E11D48;">56</div>
<div class="t" style="left:733.30px;top:642px;font-size:9.0px;color:#374151;font-weight:400;-webkit-text-stroke:0.3px #374151;">7</div>
<svg style="position:absolute;left:0;top:0;overflow:visible" width="1" height="1"><path d="M937.4 644.4 L940.05 647.0 L942.6999999999999 644.4" fill="none" stroke="#E11D48" stroke-width="1.3" stroke-linecap="round" stroke-linejoin="round"/></svg>
<div class="t" style="left:948.60px;top:642px;font-size:9.0px;color:#E11D48;font-weight:400;-webkit-text-stroke:0.4px #E11D48;">3</div>
<div style="position:absolute;left:170px;top:701px;width:960px;height:75px;background:#F8F9FB;border:1px solid #E9ECEF;border-bottom-color:#DCDFE4;border-radius:6px;box-sizing:border-box;box-shadow:0 1px 1px rgba(17,24,39,0.05)"></div>
<div class="t" style="left:199.80px;top:736px;font-size:10.4px;color:#374151;font-weight:400;letter-spacing:0.081px;-webkit-text-stroke:0.3px #374151;">&copy; 2019-2021 Themesberg</div>
</body></html>
